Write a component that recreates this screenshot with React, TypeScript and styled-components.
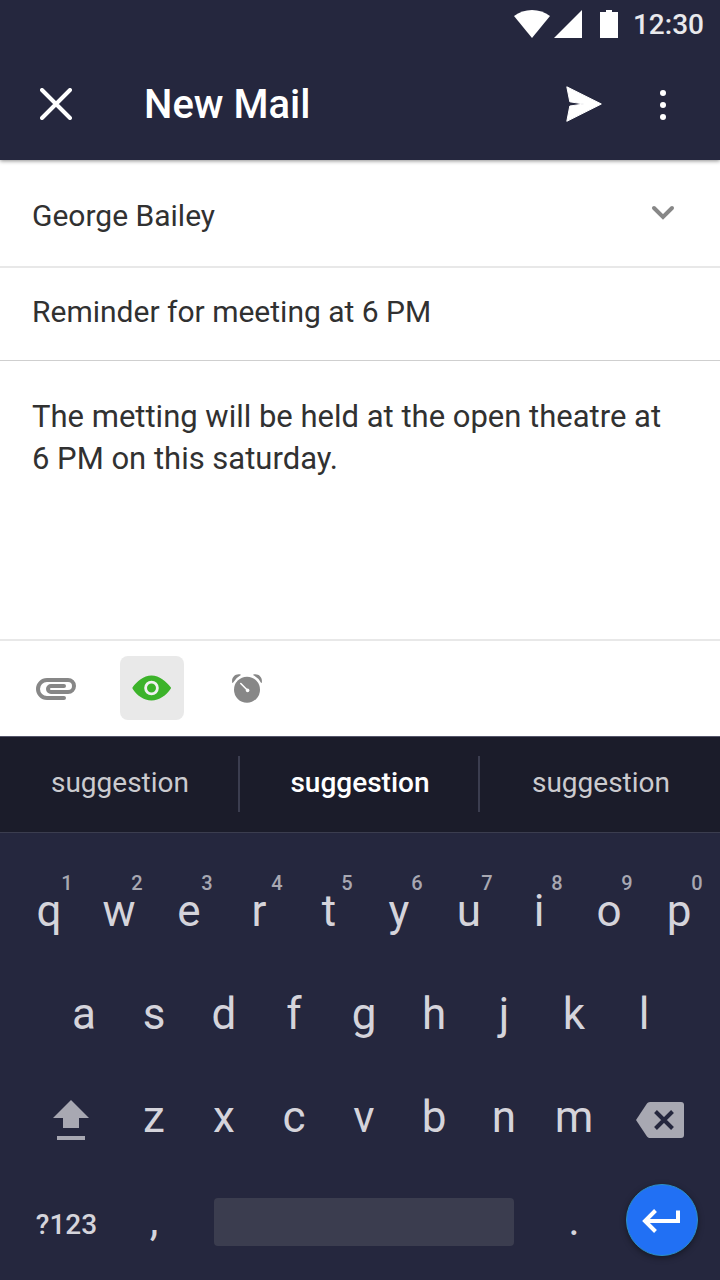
import React from "react";
import styled, { createGlobalStyle, css } from "styled-components";

const color = {
  navy: "#25273e",
  ink: "#1b1c2a",
  text: "#313131",
  muted: "#878787",
  rule: "#e8e8e8",
  key: "#d5d4db",
  keyDim: "#a8a8b2",
  space: "#3b3d4f",
  green: "#3cb32a",
  blue: "#2170f4",
};

const GlobalStyle = createGlobalStyle`
  *, *::before, *::after { box-sizing: border-box; }
  body { margin: 0; background: #fff; }
  body, button, input, textarea { font-family: Roboto, "Liberation Sans", sans-serif; }
  svg { display: block; flex: none; }
`;

const Screen = styled.div`
  display: flex;
  flex-direction: column;
  min-height: 100vh;
`;

const plainButton = css`
  display: flex;
  align-items: center;
  justify-content: center;
  margin: 0;
  padding: 0;
  border: 0;
  background: none;
  color: inherit;
  cursor: pointer;
`;

const Header = styled.header`
  position: relative;
  background: ${color.navy};
  color: #fff;
  box-shadow: 0 1px 4px rgba(0, 0, 0, 0.45);
`;

const StatusBar = styled.div`
  display: flex;
  align-items: center;
  justify-content: flex-end;
  height: 48px;
  padding-right: 16px;
`;

const StatusIcons = styled.div`
  display: flex;
  align-items: center;
  gap: 4px;
  margin-right: 15px;
`;

const Clock = styled.time`
  padding-top: 2px;
  color: #e9e9ec;
  font-size: 28px;
  font-weight: 500;
  line-height: 32px;
`;

const AppBar = styled.div`
  display: flex;
  align-items: center;
  height: 112px;
  padding: 0 24px;
`;

const BarButton = styled.button`
  ${plainButton}
  width: 64px;
  height: 64px;
`;

const Title = styled.h1`
  flex: 1;
  margin: 0 0 0 56px;
  padding-top: 2px;
  font-size: 40px;
  font-weight: 500;
  line-height: 48px;
`;

const BarActions = styled.div`
  display: flex;
  gap: 16px;
  margin-right: 1px;
`;

const Form = styled.form`
  display: flex;
  flex: 1;
  flex-direction: column;
`;

const FieldRow = styled.div`
  display: flex;
  align-items: center;
  padding: 0 25px 0 32px;
`;

const RecipientRow = styled(FieldRow)`
  height: 108px;
  border-bottom: 2px solid ${color.rule};
`;

const SubjectRow = styled(FieldRow)`
  height: 93px;
  padding-bottom: 6px;
  border-bottom: 1px solid #cfcfcf;
`;

const fieldText = css`
  min-width: 0;
  border: 0;
  outline: 0;
  background: none;
  color: ${color.text};
`;

const TextField = styled.input`
  ${fieldText}
  flex: 1;
  height: 48px;
  padding: 0;
  font-size: 30px;
`;

const RecipientField = styled(TextField)`
  height: 52px;
  padding-top: 4px;
`;

const ExpandButton = styled.button`
  ${plainButton}
  width: 64px;
  height: 64px;
  color: ${color.muted};
`;

const Message = styled.textarea`
  ${fieldText}
  display: block;
  flex: 1;
  width: 100%;
  min-height: 160px;
  padding: 35px 48px 32px 32px;
  resize: none;
  font-size: 31px;
  line-height: 42px;
`;

const Attachments = styled.div`
  display: flex;
  gap: 32px;
  padding: 15px 24px 16px;
  border-top: 2px solid ${color.rule};
`;

const ToolButton = styled.button<{ $active?: boolean }>`
  ${plainButton}
  width: 64px;
  height: 64px;
  border-radius: 8px;
  background: ${(p) => (p.$active ? "#e9e9e9" : "none")};
  color: ${(p) => (p.$active ? color.green : color.muted)};
`;

const Suggestions = styled.div`
  display: grid;
  grid-template-columns: repeat(3, 1fr);
  align-items: center;
  height: 97px;
  padding-bottom: 1px;
  border-top: 1px solid #55566a;
  border-bottom: 1px solid ${color.space};
  background: ${color.ink};
`;

const Suggestion = styled.button<{ $best?: boolean }>`
  ${plainButton}
  height: 56px;
  padding: 0 0 4px 2px;
  color: ${(p) => (p.$best ? "#fff" : "#cbcbcf")};
  font-size: 28px;
  font-weight: ${(p) => (p.$best ? 500 : 400)};

  &:not(:last-child) {
    border-right: 2px solid ${color.space};
  }
`;

const Keyboard = styled.div`
  padding: 26px 6px 9px 14px;
  background: ${color.navy};
`;

const KeyRow = styled.div`
  display: grid;
  grid-template-columns: repeat(20, 1fr);
  height: 103px;
`;

const Key = styled.button<{ $span?: number; $indent?: boolean }>`
  ${plainButton}
  position: relative;
  grid-column: ${(p) => (p.$indent ? "2 /" : "")} span ${(p) => p.$span ?? 2};
  color: ${color.key};
  font-size: 44px;
`;

const SideKey = styled(Key)`
  justify-content: flex-end;
  padding: 6px 30px 0 0;
  color: ${color.keyDim};
`;

const SymbolKey = styled(Key)`
  padding-top: 10px;
  font-size: 28px;
  font-weight: 500;
`;

const Digit = styled.span`
  position: absolute;
  top: 14px;
  left: calc(50% + 8px);
  width: 20px;
  color: ${color.keyDim};
  font-size: 20px;
  font-weight: 500;
  line-height: 20px;
  text-align: center;
`;

const SpaceKey = styled(Key)`
  padding: 4px 25px 0;
`;

const SpaceBar = styled.span`
  width: 100%;
  height: 48px;
  border-radius: 4px;
  background: ${color.space};
`;

const EnterCap = styled.span`
  display: flex;
  align-items: center;
  justify-content: center;
  width: 72px;
  height: 72px;
  border: 1px solid #2c90c4;
  border-radius: 50%;
  background: ${color.blue};
  color: #fff;
  box-shadow: 0 2px 6px rgba(0, 0, 0, 0.4);
`;

const WifiIcon = () => (
  <svg width="36" height="28" viewBox="0 0 36 28" fill="currentColor" aria-hidden="true">
    <path d="M18 28 0 6C5 2 11.500 0 18 0s13 2 18 6z" />
  </svg>
);

const SignalIcon = () => (
  <svg width="28" height="28" viewBox="0 0 28 28" fill="currentColor" aria-hidden="true">
    <path d="M28 0v28H0z" />
  </svg>
);

const BatteryIcon = () => (
  <svg width="32" height="28" viewBox="0 0 32 28" fill="currentColor" aria-hidden="true">
    <path d="M20 0h6v2h6v26H14V2h6z" />
  </svg>
);

const CloseIcon = () => (
  <svg width="32" height="32" viewBox="0 0 32 32" fill="none" stroke="currentColor" strokeWidth="4" strokeLinecap="round" aria-hidden="true">
    <path d="M2 2l28 28M30 2L2 30" />
  </svg>
);

const SendIcon = () => (
  <svg width="38" height="36" viewBox="-2 0 38 36" fill="currentColor" stroke="currentColor" strokeLinejoin="round" aria-hidden="true">
    <path d="M.8.800 35.300 18 .8 35.300 3.800 20 18 18 3.800 15.800z" />
  </svg>
);

const MoreIcon = () => (
  <svg width="6" height="32" viewBox="0 0 6 32" fill="currentColor" aria-hidden="true">
    <circle cx="3" cy="5" r="3" />
    <circle cx="3" cy="17" r="3" />
    <circle cx="3" cy="29" r="3" />
  </svg>
);

const ChevronIcon = () => (
  <svg width="24" height="16" viewBox="0 0 24 16" fill="none" stroke="currentColor" strokeWidth="4" strokeLinecap="round" aria-hidden="true">
    <path d="M3 3l9 9 9-9" />
  </svg>
);

const ClipIcon = () => (
  <svg width="40" height="24" viewBox="0 -2 40 24" fill="none" stroke="currentColor" strokeWidth="4" strokeLinecap="round" aria-hidden="true">
    <path d="M28 20H11A9 9 0 0 1 11 2H32A6 6 0 0 1 32 14H15A3 3 0 0 1 15 8H28" />
  </svg>
);

const EyeIcon = () => (
  <svg width="40" height="26" viewBox="0 0 40 26" aria-hidden="true">
    <path fill="currentColor" d="M.6 13.800C5 6.500 11.500.5 19.500.5S34 6.500 38.700 12.200q.7.800 0 1.600C34 20.500 27.500 25.500 19.500 25.500S5 20.500.6 13.800q-.4-.8 0-1.600C5 6.500 11.500.5 19.500.5z" />
    <circle cx="19.500" cy="13" r="5.900" fill="none" stroke="#f1f1f1" strokeWidth="2.800" />
  </svg>
);

const AlarmIcon = () => (
  <svg width="34" height="30" viewBox="0 0 34 30" fill="none" strokeLinecap="round" aria-hidden="true">
    <circle cx="16" cy="16.700" r="13" fill="currentColor" />
    <path fill="currentColor" d="M1.300 9.800C0 4.500 4.500.2 9.600 1.600q.4.300-.1.700Q4.500 5 2 9.800q-.4.500-.7 0zM30.700 9.800C32 4.500 27.500.2 22.400 1.600q-.4.300.1.700Q27.500 5 30 9.800q.4.500.7 0z" />
    <path stroke="#fff" strokeWidth="1.600" d="M9.800 10.500l6.400 6.500" />
    <circle cx="16.600" cy="17.400" r="1.800" fill="#fff" />
  </svg>
);

const ShiftIcon = () => (
  <svg width="36" height="40" viewBox="0 0 36 40" fill="currentColor" aria-hidden="true">
    <path d="M18 0l18 18H26v10H10V18H0zM4 36h28v4H4z" />
  </svg>
);

const BackspaceIcon = () => (
  <svg width="48" height="36" viewBox="0 0 48 36" aria-hidden="true">
    <path fill="currentColor" d="M14 0h31a3 3 0 0 1 3 3v30a3 3 0 0 1-3 3H14c-1.400 0-2.400-.7-3.200-1.800L0 18 10.800 1.800C11.600.7 12.600 0 14 0z" />
    <path fill="none" stroke={color.navy} strokeWidth="4" d="M19.500 9.500l17 17m0-17l-17 17" />
  </svg>
);

const EnterIcon = () => (
  <svg width="40" height="26" viewBox="0 -2 40 26" fill="none" stroke="currentColor" strokeWidth="4" aria-hidden="true">
    <path d="M13.500 1.500L3 12l10.500 10.500M3 12h33V1.500" />
  </svg>
);

const letters = (text: string) => text.split("");

export default function App() {
  return (
    <Screen>
      <GlobalStyle />
      <Header>
        <StatusBar>
          <StatusIcons>
            <WifiIcon />
            <SignalIcon />
            <BatteryIcon />
          </StatusIcons>
          <Clock>12:30</Clock>
        </StatusBar>
        <AppBar>
          <BarButton type="button" aria-label="Close">
            <CloseIcon />
          </BarButton>
          <Title>New Mail</Title>
          <BarActions>
            <BarButton type="submit" form="mail" aria-label="Send">
              <SendIcon />
            </BarButton>
            <BarButton type="button" aria-label="More options">
              <MoreIcon />
            </BarButton>
          </BarActions>
        </AppBar>
      </Header>

      <Form id="mail" onSubmit={(e) => e.preventDefault()}>
        <RecipientRow>
          <RecipientField aria-label="To" defaultValue="George Bailey" />
          <ExpandButton type="button" aria-label="Show more recipients">
            <ChevronIcon />
          </ExpandButton>
        </RecipientRow>
        <SubjectRow>
          <TextField aria-label="Subject" defaultValue="Reminder for meeting at 6 PM" />
        </SubjectRow>
        <Message
          aria-label="Message"
          spellCheck={false}
          defaultValue="The metting will be held at the open theatre at 6 PM on this saturday."
        />
        <Attachments>
          <ToolButton type="button" aria-label="Attach a file">
            <ClipIcon />
          </ToolButton>
          <ToolButton type="button" aria-label="Track opens" aria-pressed="true" $active>
            <EyeIcon />
          </ToolButton>
          <ToolButton type="button" aria-label="Set a reminder">
            <AlarmIcon />
          </ToolButton>
        </Attachments>
      </Form>

      <Suggestions>
        <Suggestion type="button">suggestion</Suggestion>
        <Suggestion type="button" $best>
          suggestion
        </Suggestion>
        <Suggestion type="button">suggestion</Suggestion>
      </Suggestions>

      <Keyboard>
        <KeyRow>
          {letters("qwertyuiop").map((letter, i) => (
            <Key type="button" key={letter}>
              {letter}
              <Digit>{(i + 1) % 10}</Digit>
            </Key>
          ))}
        </KeyRow>
        <KeyRow>
          {letters("asdfghjkl").map((letter, i) => (
            <Key type="button" key={letter} $indent={i === 0}>
              {letter}
            </Key>
          ))}
        </KeyRow>
        <KeyRow>
          <SideKey type="button" $span={3} aria-label="Shift">
            <ShiftIcon />
          </SideKey>
          {letters("zxcvbnm").map((letter) => (
            <Key type="button" key={letter}>
              {letter}
            </Key>
          ))}
          <SideKey type="button" $span={3} aria-label="Backspace">
            <BackspaceIcon />
          </SideKey>
        </KeyRow>
        <KeyRow>
          <SymbolKey type="button" $span={3}>
            ?123
          </SymbolKey>
          <Key type="button">,</Key>
          <SpaceKey type="button" $span={10} aria-label="Space">
            <SpaceBar />
          </SpaceKey>
          <Key type="button">.</Key>
          <Key type="button" $span={3} aria-label="Enter">
            <EnterCap>
              <EnterIcon />
            </EnterCap>
          </Key>
        </KeyRow>
      </Keyboard>
    </Screen>
  );
}
